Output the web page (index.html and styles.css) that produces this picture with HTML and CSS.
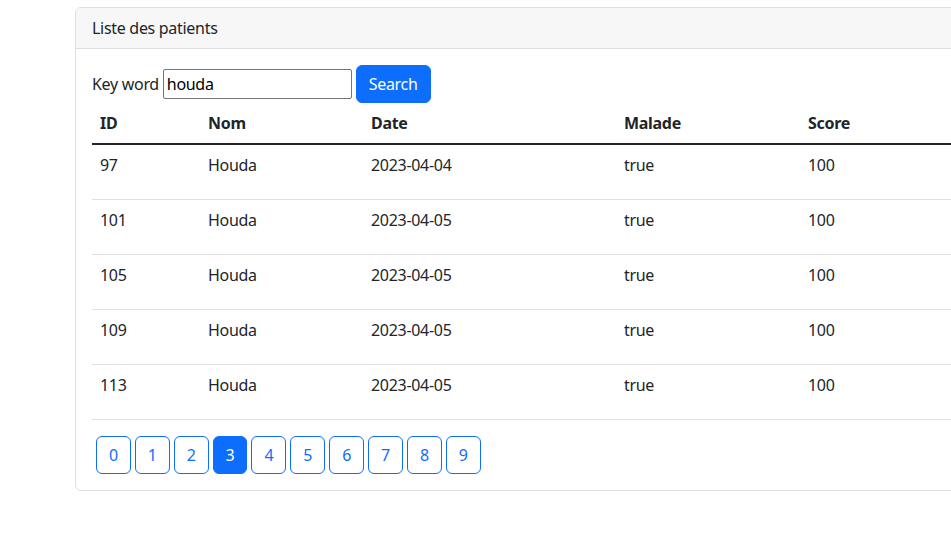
FILE: index.html
```html
<!DOCTYPE html>
<html lang="fr">
<head>
<meta charset="utf-8">
<title>Liste des patients</title>
<link rel="stylesheet" href="styles.css">
</head>
<body>
<div class="page">
  <div class="card">
    <div class="card-header">Liste des patients</div>
    <div class="card-body">
      <form class="search">
        <label class="search-label" for="kw">Key word</label>
        <input class="search-input" id="kw" type="text" value="houda">
        <button class="btn btn-primary" type="button">Search</button>
      </form>
      <table class="table">
        <colgroup>
          <col class="c-id"><col class="c-nom"><col class="c-date"><col class="c-malade"><col class="c-score"><col class="c-rest">
        </colgroup>
        <thead>
          <tr><th>ID</th><th>Nom</th><th>Date</th><th>Malade</th><th>Score</th><th></th></tr>
        </thead>
        <tbody class="divider">
          <tr><td>97</td><td>Houda</td><td>2023-04-04</td><td>true</td><td>100</td><td></td></tr>
          <tr><td>101</td><td>Houda</td><td>2023-04-05</td><td>true</td><td>100</td><td></td></tr>
          <tr><td>105</td><td>Houda</td><td>2023-04-05</td><td>true</td><td>100</td><td></td></tr>
          <tr><td>109</td><td>Houda</td><td>2023-04-05</td><td>true</td><td>100</td><td></td></tr>
          <tr><td>113</td><td>Houda</td><td>2023-04-05</td><td>true</td><td>100</td><td></td></tr>
        </tbody>
      </table>
      <ul class="pages">
        <li><a class="page-btn" href="#">0</a></li>
        <li><a class="page-btn" href="#">1</a></li>
        <li><a class="page-btn" href="#">2</a></li>
        <li><a class="page-btn active" href="#">3</a></li>
        <li><a class="page-btn" href="#">4</a></li>
        <li><a class="page-btn" href="#">5</a></li>
        <li><a class="page-btn" href="#">6</a></li>
        <li><a class="page-btn" href="#">7</a></li>
        <li><a class="page-btn" href="#">8</a></li>
        <li><a class="page-btn" href="#">9</a></li>
      </ul>
    </div>
  </div>
</div>
</body>
</html>
```

FILE: styles.css
```css
html, body {
  margin: 0;
  padding: 0;
  overflow: hidden;
  background: #fff;
}
body {
  font-family: "Noto Sans", "Open Sans", sans-serif;
  font-size: 16px;
  line-height: 1.5;
  letter-spacing: -0.3px;
  color: #212529;
}
.page {
  padding: 7px 0 0 75px;
}
.card {
  width: 1100px;
  border: 1px solid #dfdfdf;
  border-radius: 6px;
  background: #fff;
}
.card-header {
  padding: 8px 16px;
  background: #f7f7f7;
  border-bottom: 1px solid #dfdfdf;
  border-radius: 5px 5px 0 0;
}
.card-body {
  padding: 16px;
}
.search {
  margin: 0;
}
.search-input {
  font: inherit;
  letter-spacing: inherit;
  line-height: 24px;
  color: #000;
  width: 189px;
  box-sizing: border-box;
  height: 30px;
  padding: 2px 3px;
  border: 1px solid #767676;
  border-radius: 2px;
  margin: 0;
}
.btn {
  font: inherit;
  letter-spacing: inherit;
  line-height: 24px;
  padding: 6px 12px;
  margin: 0;
  border-radius: 6px;
  border: 1px solid transparent;
  cursor: pointer;
}
.btn-primary {
  background: #0d6efd;
  border-color: #0d6efd;
  color: #fff;
}
.table {
  width: 1060px;
  border-collapse: collapse;
  margin: 0 0 16px 0;
}
.c-id { width: 108px; }
.c-nom { width: 163px; }
.c-date { width: 253px; }
.c-malade { width: 184px; }
.c-score { width: 180px; }
.table th {
  text-align: left;
  vertical-align: top;
  font-weight: 700;
  padding: 8px;
}
.table td {
  vertical-align: top;
  padding: 8px;
  height: 38px;
  border-bottom: 1px solid #dee2e6;
}
.table tbody.divider tr:first-child td {
  border-top: 2px solid #212529;
}
.pages {
  list-style: none;
  margin: 0;
  padding: 0;
  display: flex;
}
.pages li {
  margin-left: 4px;
}
.page-btn {
  display: block;
  padding: 6px 12px;
  line-height: 24px;
  border: 1px solid #0d6efd;
  border-radius: 6px;
  color: #0d6efd;
  text-decoration: none;
}
.page-btn.active {
  background: #0d6efd;
  color: #fff;
}
```
